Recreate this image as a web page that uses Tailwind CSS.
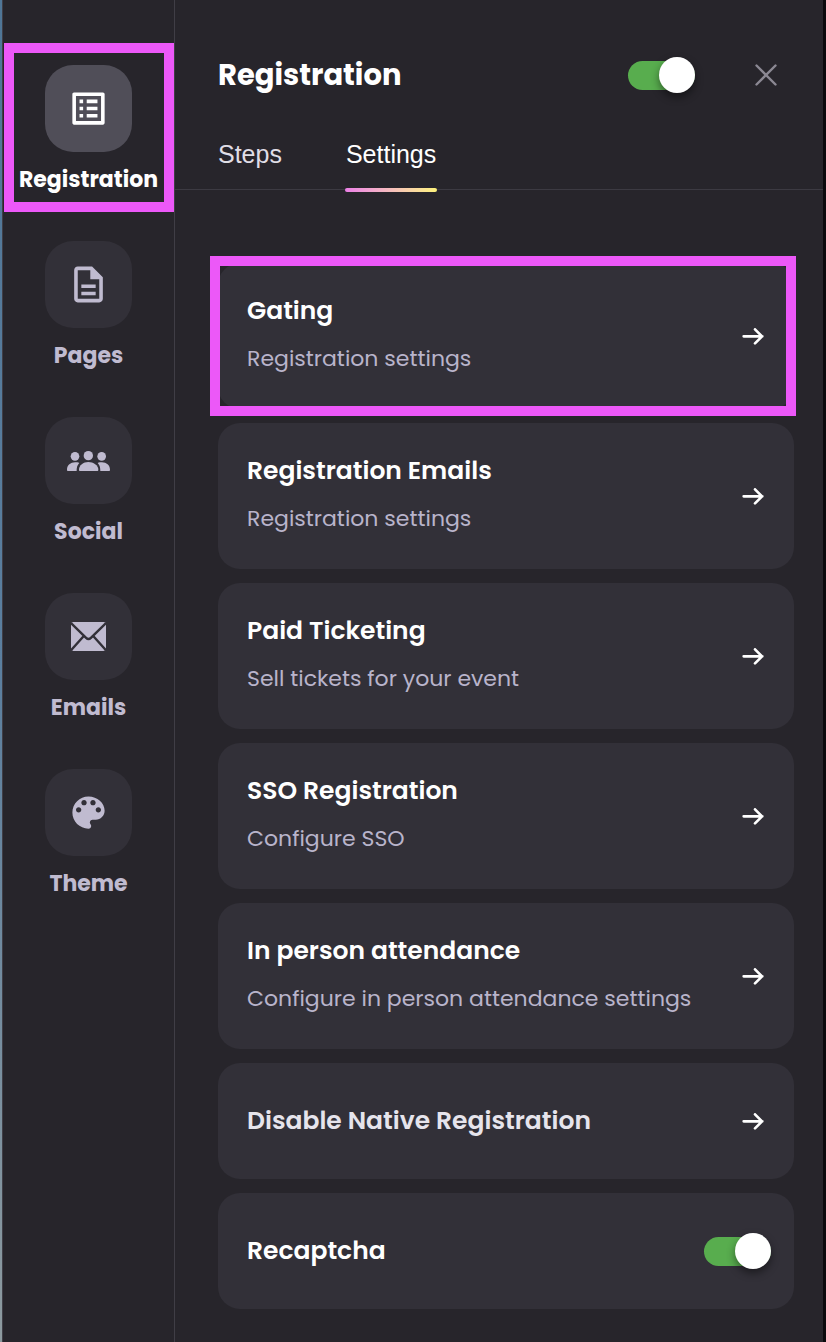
<!DOCTYPE html>
<html lang="en">
<head>
    <meta charset="UTF-8">
    <meta name="viewport" content="width=device-width, initial-scale=1.0">
    <title>Registration settings</title>
    <script src="https://cdn.jsdelivr.net/npm/@tailwindcss/browser@4"></script>
</head>
<body class="flex min-h-screen bg-[#27252b] font-['Poppins','Inter',sans-serif] text-white">
    <!-- Window edge -->
    <div class="w-[2px] shrink-0 bg-linear-to-b from-[#4f7697] via-[#5b7f9f] to-[#8d9a9f]"></div>

    <!-- Sidebar -->
    <nav class="flex w-[173px] shrink-0 flex-col gap-[45px] border-x border-[#403e46] pt-[65px] text-[22px] leading-8 font-bold text-[#c0bbd0]">
        <a href="#registration" class="relative flex flex-col items-center gap-3 text-white">
            <span class="flex size-[87px] items-center justify-center rounded-[28px] bg-[#504e58]">
                <svg class="size-[43px]" viewBox="0 0 24 24" fill="currentColor"><path d="M19 5v14H5V5h14m1.1-2H3.9c-.5 0-.9.4-.9.9v16.2c0 .4.4.9.9.9h16.2c.4 0 .9-.5.9-.9V3.9c0-.5-.5-.9-.9-.9zM11 7h6v2h-6V7zm0 4h6v2h-6v-2zm0 4h6v2h-6zM7 7h2v2H7zm0 4h2v2H7zm0 4h2v2H7z"/></svg>
            </span>
            Registration
            <span class="pointer-events-none absolute -top-[22px] right-0 -bottom-4 left-px border-10 border-[#ec58f8]"></span>
        </a>
        <a href="#pages" class="flex flex-col items-center gap-3">
            <span class="flex size-[87px] items-center justify-center rounded-[28px] bg-[#323038]">
                <svg class="size-[43px]" viewBox="0 0 24 24" fill="currentColor"><path d="M8 16h8v2H8zm0-4h8v2H8zm6-10H6c-1.1 0-2 .9-2 2v16c0 1.1.89 2 1.99 2H18c1.1 0 2-.9 2-2V8l-6-6zm4 18H6V4h7v5h5v11z"/></svg>
            </span>
            Pages
        </a>
        <a href="#social" class="flex flex-col items-center gap-3">
            <span class="flex size-[87px] items-center justify-center rounded-[28px] bg-[#323038]">
                <svg class="h-5 w-[43px]" viewBox="0 0 129 60" fill="currentColor">
                    <circle cx="24" cy="16" r="13"/>
                    <circle cx="64" cy="14" r="14"/>
                    <circle cx="104" cy="16" r="13"/>
                    <path d="M36 56c0-13 13-23 28-23s30 10 30 23c0 3-1 4-4 4H40c-3 0-4-1-4-4z"/>
                    <path d="M0 56c0-13 11-22 24-22 5 0 9 0 13 2-5 6-8 11-8 24H4c-3 0-4-1-4-4z"/>
                    <path d="M129 56c0-13-11-22-24-22-5 0-9 0-13 2 5 6 8 11 8 24h25c3 0 4-1 4-4z"/>
                </svg>
            </span>
            Social
        </a>
        <a href="#emails" class="flex flex-col items-center gap-3">
            <span class="flex size-[87px] items-center justify-center rounded-[28px] bg-[#323038]">
                <svg class="h-[29px] w-[35px]" viewBox="0 0 102 84" fill="none">
                    <rect width="102" height="84" rx="7" fill="currentColor"/>
                    <path d="M0 3l44 43q7 7 14 0l44-43M0 82l36-40M102 82L66 42" stroke="#323038" stroke-width="7"/>
                </svg>
            </span>
            Emails
        </a>
        <a href="#theme" class="flex flex-col items-center gap-3">
            <span class="flex size-[87px] items-center justify-center rounded-[28px] bg-[#323038]">
                <svg class="size-[43px]" viewBox="0 0 24 24" fill="currentColor"><path d="M12 3c-4.97 0-9 4.03-9 9s4.03 9 9 9c.83 0 1.5-.67 1.5-1.5 0-.39-.15-.74-.39-1.01-.23-.26-.38-.61-.38-.99 0-.83.67-1.5 1.5-1.5H16c2.76 0 5-2.24 5-5 0-4.42-4.03-8-9-8zm-5.5 9c-.83 0-1.5-.67-1.5-1.5S5.67 9 6.5 9 8 9.67 8 10.5 7.33 12 6.5 12zm3-4C8.67 8 8 7.33 8 6.5S8.67 5 9.5 5s1.5.67 1.5 1.5S10.33 8 9.5 8zm5 0c-.83 0-1.5-.67-1.5-1.5S13.67 5 14.5 5s1.5.67 1.5 1.5S15.33 8 14.5 8zm3 4c-.83 0-1.5-.67-1.5-1.5S16.67 9 17.5 9s1.5.67 1.5 1.5-.67 1.5-1.5 1.5z"/></svg>
            </span>
            Theme
        </a>
    </nav>

    <!-- Panel -->
    <main class="min-w-0 flex-1 border-r-3 border-[#0b0a0d]">
        <header class="flex items-center pt-[55px] pr-[46px] pl-[43px]">
            <h1 class="flex-1 text-[29px] leading-10 font-bold">Registration</h1>
            <input type="checkbox" checked aria-label="Registration enabled" class="relative h-[29px] w-[67px] appearance-none rounded-full bg-[#58ad4e] before:absolute before:-top-1 before:right-0 before:size-9 before:rounded-full before:bg-white before:shadow-[0_4px_8px_rgba(0,0,0,0.45)]">
            <button type="button" aria-label="Close" class="ml-[60px] text-[#8b8893]">
                <svg class="size-[22px]" viewBox="0 0 22 22" fill="none" stroke="currentColor" stroke-width="2.4" stroke-linecap="round"><path d="M1.5 1.5l19 19M20.5 1.5l-19 19"/></svg>
            </button>
        </header>

        <!-- Tabs -->
        <div class="flex h-[95px] gap-16 border-b border-[#3c3a42] pt-[39px] pl-[43px] font-['Liberation_Sans',sans-serif] text-[25px] leading-10">
            <a href="#steps" class="text-[#e0dee6]">Steps</a>
            <a href="#settings" class="relative">
                Settings
                <span class="absolute -inset-x-px -bottom-[3px] h-1 rounded-full bg-linear-to-r from-[#ec7fe6] to-[#fdf27a]"></span>
            </a>
        </div>

        <!-- Settings list -->
        <div class="flex flex-col gap-[14px] pt-[73px] pr-[29px] pb-[33px] pl-[43px]">
            <a href="#gating" class="relative flex h-[146px] items-center justify-between rounded-[22px] bg-[#323038] pr-[30px] pl-[29px]">
                <div class="pb-[2px]">
                    <h2 class="text-[25px] leading-10 font-semibold">Gating</h2>
                    <p class="mt-2 text-[22px] leading-10 text-[#b9b4cb]">Registration settings</p>
                </div>
                <svg class="h-[17px] w-[22px]" viewBox="0 0 66 51" fill="none" stroke="currentColor" stroke-width="8" stroke-linecap="round" stroke-linejoin="round"><path d="M5 25h56M39 4l21 21-21 21"/></svg>
                <span class="pointer-events-none absolute -top-[7px] -right-[2px] -bottom-[7px] -left-2 border-10 border-[#ec58f8]"></span>
            </a>
            <a href="#registration-emails" class="flex h-[146px] items-center justify-between rounded-[22px] bg-[#323038] pr-[30px] pl-[29px]">
                <div class="pb-[2px]">
                    <h2 class="text-[25px] leading-10 font-semibold">Registration Emails</h2>
                    <p class="mt-2 text-[22px] leading-10 text-[#b9b4cb]">Registration settings</p>
                </div>
                <svg class="h-[17px] w-[22px]" viewBox="0 0 66 51" fill="none" stroke="currentColor" stroke-width="8" stroke-linecap="round" stroke-linejoin="round"><path d="M5 25h56M39 4l21 21-21 21"/></svg>
            </a>
            <a href="#paid-ticketing" class="flex h-[146px] items-center justify-between rounded-[22px] bg-[#323038] pr-[30px] pl-[29px]">
                <div class="pb-[2px]">
                    <h2 class="text-[25px] leading-10 font-semibold">Paid Ticketing</h2>
                    <p class="mt-2 text-[22px] leading-10 text-[#b9b4cb]">Sell tickets for your event</p>
                </div>
                <svg class="h-[17px] w-[22px]" viewBox="0 0 66 51" fill="none" stroke="currentColor" stroke-width="8" stroke-linecap="round" stroke-linejoin="round"><path d="M5 25h56M39 4l21 21-21 21"/></svg>
            </a>
            <a href="#sso" class="flex h-[146px] items-center justify-between rounded-[22px] bg-[#323038] pr-[30px] pl-[29px]">
                <div class="pb-[2px]">
                    <h2 class="text-[25px] leading-10 font-semibold">SSO Registration</h2>
                    <p class="mt-2 text-[22px] leading-10 text-[#b9b4cb]">Configure SSO</p>
                </div>
                <svg class="h-[17px] w-[22px]" viewBox="0 0 66 51" fill="none" stroke="currentColor" stroke-width="8" stroke-linecap="round" stroke-linejoin="round"><path d="M5 25h56M39 4l21 21-21 21"/></svg>
            </a>
            <a href="#in-person" class="flex h-[146px] items-center justify-between rounded-[22px] bg-[#323038] pr-[30px] pl-[29px]">
                <div class="pb-[2px]">
                    <h2 class="text-[25px] leading-10 font-semibold">In person attendance</h2>
                    <p class="mt-2 text-[22px] leading-10 text-[#b9b4cb]">Configure in person attendance settings</p>
                </div>
                <svg class="h-[17px] w-[22px]" viewBox="0 0 66 51" fill="none" stroke="currentColor" stroke-width="8" stroke-linecap="round" stroke-linejoin="round"><path d="M5 25h56M39 4l21 21-21 21"/></svg>
            </a>
            <a href="#disable-native" class="flex h-[116px] items-center justify-between rounded-[22px] bg-[#323038] pr-[30px] pl-[29px]">
                <h2 class="text-[25px] leading-10 font-semibold text-[#e6e4ec]">Disable Native Registration</h2>
                <svg class="h-[17px] w-[22px]" viewBox="0 0 66 51" fill="none" stroke="currentColor" stroke-width="8" stroke-linecap="round" stroke-linejoin="round"><path d="M5 25h56M39 4l21 21-21 21"/></svg>
            </a>
            <div class="flex h-[116px] items-center justify-between rounded-[22px] bg-[#323038] pr-[23px] pl-[29px]">
                <label for="recaptcha" class="text-[25px] leading-10 font-semibold">Recaptcha</label>
                <input id="recaptcha" type="checkbox" checked class="relative h-[29px] w-[67px] appearance-none rounded-full bg-[#58ad4e] before:absolute before:-top-1 before:right-0 before:size-9 before:rounded-full before:bg-white before:shadow-[0_4px_8px_rgba(0,0,0,0.45)]">
            </div>
        </div>
    </main>
</body>
</html>
